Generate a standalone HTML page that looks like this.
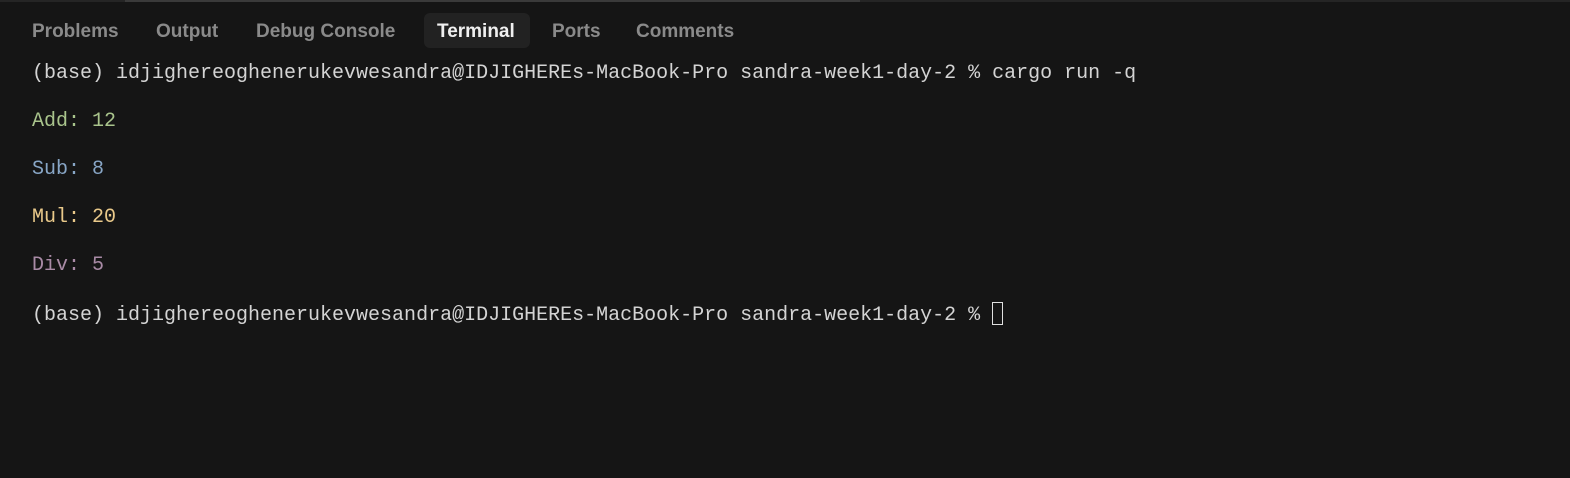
<!DOCTYPE html>
<html><head><style>
html,body{margin:0;padding:0;background:#151515;width:1570px;height:478px;overflow:hidden}
.top{position:absolute;left:0;top:0;width:1570px;height:2px;background:#252525}
.top2{position:absolute;left:125px;top:0;width:735px;height:2px;background:#3a3a3a}
.tabs{position:absolute;top:13px;left:0;height:35px;font-family:"Liberation Sans",sans-serif;font-size:19px;font-weight:bold;color:#8a8a8a}
.tab{position:absolute;top:0;height:35px;line-height:37px;white-space:nowrap}
.active{background:#222;color:#f0f0f0;border-radius:6px;padding:0 15px 0 13px}
.t{position:absolute;left:32px;font-family:"Liberation Mono",monospace;font-size:20px;color:#d4d4d4;white-space:pre;line-height:24px}
.cur{display:inline-block;width:9px;height:21px;border:1.5px solid #e0e0e0;vertical-align:-5px}
</style></head><body>
<div class="top"></div><div class="top2"></div>
<div class="tabs">
<span class="tab" style="left:32px">Problems</span>
<span class="tab" style="left:156px">Output</span>
<span class="tab" style="left:256px">Debug Console</span>
<span class="tab active" style="left:424px">Terminal</span>
<span class="tab" style="left:552px">Ports</span>
<span class="tab" style="left:636px">Comments</span>
</div>
<div class="t" style="top:62px">(base) idjighereoghenerukevwesandra@IDJIGHEREs-MacBook-Pro sandra-week1-day-2 % cargo run -q</div>
<div class="t" style="top:110px;color:#a9c48c">Add: 12</div>
<div class="t" style="top:158px;color:#88a6c6">Sub: 8</div>
<div class="t" style="top:206px;color:#e9c98a">Mul: 20</div>
<div class="t" style="top:254px;color:#a98ba6">Div: 5</div>
<div class="t" style="top:302px">(base) idjighereoghenerukevwesandra@IDJIGHEREs-MacBook-Pro sandra-week1-day-2 % <span class="cur"></span></div>
</body></html>
